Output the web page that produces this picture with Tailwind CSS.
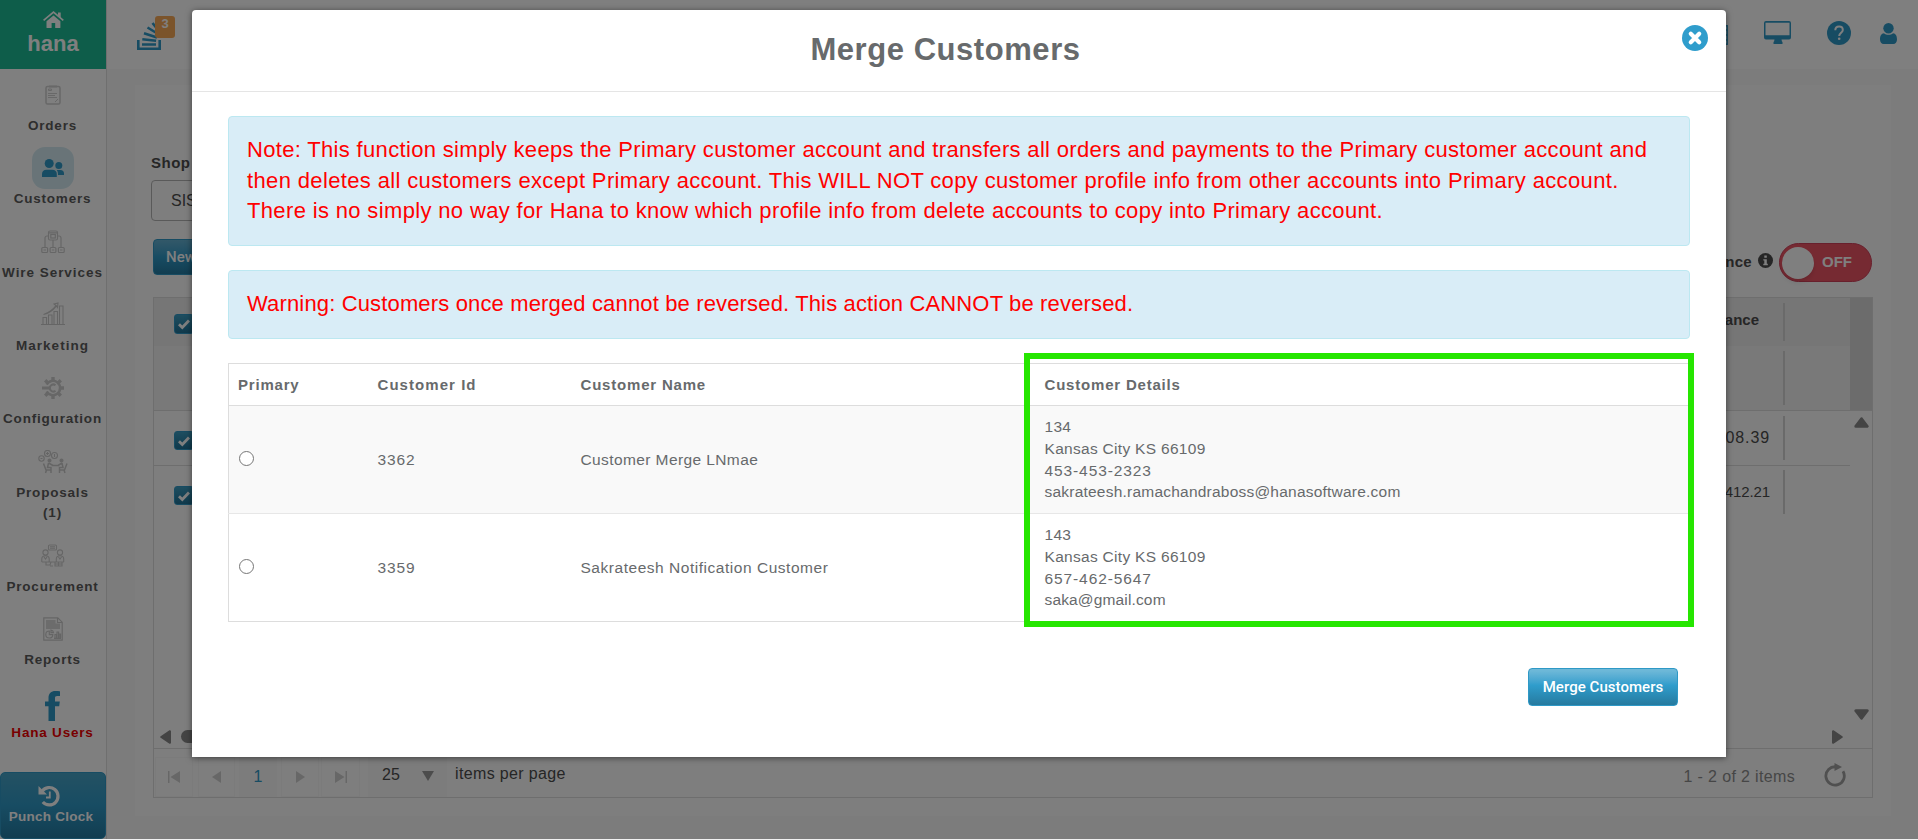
<!DOCTYPE html>
<html lang="en">
<head>
  <meta charset="UTF-8" />
  <meta name="viewport" content="width=device-width, initial-scale=1.0" />
  <title>Hana - Customers</title>
  <script src="https://cdn.jsdelivr.net/npm/@tailwindcss/browser@4"></script>
  <style>
    body { font-family: 'Liberation Sans', Arial, sans-serif; }
  </style>
</head>
<body class="relative h-[840px] overflow-hidden bg-[#f1f1f1]">

  <div class="flex h-[839px] bg-[#f8f8f8]">
    <!-- Sidebar -->
    <aside class="flex w-[107px] shrink-0 flex-col border-r border-[#dedede] bg-white text-center text-[13.500px] font-bold tracking-[0.800px] text-[#5c5c5c]">
      <a href="#" class="flex h-[69px] w-[106px] shrink-0 flex-col items-center bg-[#1cbb94] pt-[11px] text-white">
        <svg class="h-[18px] w-[21px]" viewBox="0 0 21 18" fill="#fff"><path d="M10.500 4.500 3.500 10.300V16.500a.6.6 0 0 0 .6.6H8.600V12h3.600v5.100h4.600a.6.6 0 0 0 .6-.6V10.300z"/><path d="M.6 9.300 10.500 1.200l9.800 8.100" fill="none" stroke="#fff" stroke-width="1.700"/><path d="M15 1.500h2.700v5.200L15 4.500z"/></svg>
        <span class="mt-0.5 text-[22px] leading-[26px] tracking-[0.100px]">hana</span>
      </a>
      <nav class="flex w-[105px] grow flex-col pt-1 leading-5">
        <a href="#" class="flex h-[73.300px] flex-col items-center">
          <span class="flex h-[43px] w-[42px] items-center justify-center">
            <svg class="h-5 w-4" viewBox="0 0 16 20" fill="none" stroke="#d0d0d0"><rect x="1" y="1.500" width="14" height="17.500" rx="1.500" stroke-width="1.500"/><path d="M3.500 4h3v1.500h-3zM3 8.500h9M3 10.500h7M3 12.500h9M10 17l3-3"/><path d="M4 1.500h8" stroke-width="2"/></svg>
          </span>
          <span>Orders</span>
        </a>
        <a href="#" class="flex h-[73.300px] flex-col items-center">
          <span class="mt-px flex h-[42px] w-[42px] items-center justify-center rounded-[13px] bg-[#d3e9f1]">
            <svg class="h-[18px] w-[22px]" viewBox="0 0 22 18" fill="#2f99c6"><circle cx="7.200" cy="4.500" r="4.500"/><circle cx="16.800" cy="6.500" r="3.500"/><path d="M0 18v-3c0-2.500 1.500-4.300 4.500-4.300h5.700c3 0 4.600 1.800 4.600 4.300v3z"/><path d="M16 16h6v-1.700c0-2-1.300-3.300-3.600-3.300h-3.600c.8 1.100 1.200 2.500 1.200 4z"/></svg>
          </span>
          <span>Customers</span>
        </a>
        <a href="#" class="flex h-[73.300px] flex-col items-center">
          <span class="flex h-[45px] w-[42px] items-center justify-center">
            <svg class="h-6 w-6" viewBox="0 0 24 24" fill="none" stroke="#cdcdcd" stroke-width="1.200"><rect x="7.500" y="1" width="9" height="9" rx="1.500"/><rect x="9.800" y="4.500" width="4.500" height="3.500"/><path d="M7.500 2.800h9M12 10v7M7.500 6H6a2 2 0 0 0-2 2v9M16.500 6H18a2 2 0 0 1 2 2v9"/><rect x=".8" y="17.500" width="5.800" height="5" rx="1"/><rect x="9.100" y="17.500" width="5.800" height="5" rx="1"/><rect x="17.400" y="17.500" width="5.800" height="5" rx="1"/><path d="M2.500 20h2.500M10.800 20h2.500M19 20h2.500"/></svg>
          </span>
          <span class="-mt-0.5 whitespace-nowrap tracking-[0.950px]">Wire Services</span>
        </a>
        <a href="#" class="flex h-[73.300px] flex-col items-center">
          <span class="flex h-[43px] w-[42px] items-center justify-center">
            <svg class="h-6 w-6" viewBox="0 0 24 24" fill="none" stroke="#cbcbcb" stroke-width="1.100"><path d="M0 22.500h24M2 22v-6.500h3.500V22M7.500 22v-9H11v9M13 22V9.500h3.500V22M18.500 22V4H22v18M2.500 12.500C8 10.500 12 7.500 15 3.500L13 2l4-1-.5 4.500-1-1.500C12 8.500 8 11.500 2.500 12.500"/></svg>
          </span>
          <span class="tracking-[1px]">Marketing</span>
        </a>
        <a href="#" class="flex h-[73.300px] flex-col items-center">
          <span class="flex h-[43px] w-[42px] items-center justify-center">
            <svg class="mt-px h-[22px] w-[22px]" viewBox="0 0 22 22" fill="none" stroke="#cecece"><path d="M4.600 14.500a7.200 7.200 0 1 0 0-7" stroke-width="2.600"/><path d="M11 0v4M11 18v4M18 11h4M3.200 3.200l2.900 2.900M15.900 15.900l2.900 2.900M18.800 3.200l-2.900 2.900M6.100 15.900l-2.900 2.900" stroke-width="3.400"/><path d="M0 11h8.500" stroke-width="3"/><path d="M13.500 8.300a3.500 3.500 0 1 0 0 5.400" stroke-width="2"/></svg>
          </span>
          <span class="whitespace-nowrap">Configuration</span>
        </a>
        <a href="#" class="flex h-[94px] flex-col items-center">
          <span class="flex h-[43px] w-[42px] items-center justify-center">
            <svg class="mt-0.5 h-6 w-[30px]" viewBox="0 0 30 24" fill="none" stroke="#cbcbcb" stroke-width="1.100"><circle cx="3.500" cy="8.500" r="2.700"/><circle cx="9.500" cy="3.500" r="3"/><circle cx="16.500" cy="5.500" r="3"/><path d="M2.500 8.500h2M8 3.500h3M9.500 2v3M16.500 4v3"/><circle cx="11.500" cy="10.500" r="1.500" fill="#cbcbcb"/><circle cx="23.500" cy="10.500" r="1.500" fill="#cbcbcb"/><path d="M5.500 13.500 8 20h5M10.500 13l-1 4.500h3.500v5.500M7.500 23l1-3M10.500 13l4.500 2.500M29 13.500 26.500 20h-4.500M24 13l1 4.500h-3.500v5.500M27 23l-1-3M24 13l-4 2.500M14 15.500h7" stroke-width="1.500"/></svg>
          </span>
          <span class="mt-px leading-5">Proposals<br>(1)</span>
        </a>
        <a href="#" class="flex h-[73.300px] flex-col items-center">
          <span class="flex h-[44px] w-[42px] items-center justify-center">
            <svg class="mt-0.5 h-6 w-6" viewBox="0 0 24 24" fill="none" stroke="#cdcdcd" stroke-width="1.100"><rect x="7.500" y="1" width="8" height="5" rx="1"/><path d="M9 2.800h5M9 4.300h5"/><circle cx="4.500" cy="8.500" r="2.600"/><circle cx="19" cy="8.500" r="2.600"/><path d="M.8 18v-3c0-2 1.500-3.200 3.700-3.200S8.200 13 8.200 15v3M15.300 18v-3c0-2 1.500-3.200 3.700-3.200s3.700 1.200 3.700 3.200v3M.8 18h22M3 13l1.500 2L6 13M17.500 13l1.500 2 1.500-2M5 18v3h4l1-3M9 22h3M14 18v4h7v-4M17.500 18v4M14 20h7"/></svg>
          </span>
          <span>Procurement</span>
        </a>
        <a href="#" class="flex h-[73.300px] flex-col items-center">
          <span class="flex h-[43px] w-[42px] items-center justify-center">
            <svg class="mt-0.5 h-6 w-5" viewBox="0 0 20 24" fill="none" stroke="#cbcbcb" stroke-width="1.200"><path d="M.8.800h14l4.400 4.400v18H.8z"/><path d="M3 3h9.500v3.500H17V12H3z" fill="#d8d8d8" stroke="none"/><path d="M14.500 1v4.500H19"/><path d="M6.300 14a3.500 3.500 0 1 0 3.500 3.700H6.300zM8 13a3 3 0 0 1 2.500 2.700H8zM12 21v-3.500h1.600V21M14 21v-6h1.600v6M16.200 21v-4h1.400v4M11 21.300h7"/></svg>
          </span>
          <span>Reports</span>
        </a>
        <a href="#" class="flex flex-col items-center text-[#f00000]">
          <span class="flex h-[43px] w-[42px] items-end justify-center pb-0.5">
            <svg class="h-[30px] w-[15px]" viewBox="0 0 15 30" fill="#2f99c6"><path d="M15 .2v4.800h-2.700c-1.900 0-2.300.9-2.300 2.300v3.100h4.800l-.6 4.900H10V30H3.500V15.300H0v-4.900h3.500V6.800C3.500 2.500 6.200 0 10.300 0c2 0 3.900.1 4.700.2z"/></svg>
          </span>
          <span>Hana Users</span>
        </a>
      </nav>
      <button class="flex h-[67px] w-[106px] shrink-0 flex-col items-center rounded-[5px] border border-[#2f99c6] bg-linear-to-b from-[#47a3c6] via-[#2f99c6] to-[#247ba2] pt-[12px] pr-1 font-bold tracking-[0.250px] text-white">
        <svg class="mr-1 h-[22px] w-[22px]" viewBox="0 0 22 22" fill="none" stroke="#fff"><path d="M4.200 6.200A8.700 8.700 0 1 1 4.800 17" stroke-width="3.200"/><path d="M.5 1v8.500H9z" fill="#fff" stroke="none"/><path d="M11.800 6.500v6H8" stroke-width="1.800"/></svg>
        <span class="leading-[19px] whitespace-nowrap">Punch Clock</span>
      </button>
    </aside>

    <main class="flex grow flex-col">
      <!-- Top bar -->
      <header class="flex h-[69px] items-start justify-between bg-white pr-[22px] pl-[30px]">
        <div class="relative mt-5">
          <svg class="h-[30px] w-6" viewBox="0 0 24 30" fill="none" stroke="#2f99c6" stroke-width="2.600"><path d="M1.300 20v8.700h21.400V20"/><path d="M5 24.500h14M5.300 19.200l13.800 1.500M7 13.200l13 4.300M10.500 7.500l11.500 7M15.500 3l8 10"/></svg>
          <span class="absolute -top-1 left-[18px] h-[22px] w-5 rounded-[3px] bg-[#f7a957] text-center text-[13px] leading-4 font-bold text-white">3</span>
        </div>
        <div class="flex text-[#2f99c6]">
          <svg class="mt-[25px] mr-[36px] h-5 w-[22px]" viewBox="0 0 22 20" fill="none" stroke="#2f99c6" stroke-width="1.500"><rect x=".8" y=".8" width="20.400" height="18.400"/><path d="M0 5h22M0 10h22M0 15h22"/></svg>
          <svg class="mt-[21px] h-[23px] w-[27px]" viewBox="0 0 27 23"><path d="M2 0h23a2 2 0 0 1 2 2v14.500a2 2 0 0 1-2 2h-7.500l.5 2.200h.5V23h-9v-2.300h.5l.5-2.200H2a2 2 0 0 1-2-2V2a2 2 0 0 1 2-2zM1.500 1.700v12.600h24V1.700z" fill="#2f99c6" fill-rule="evenodd"/></svg>
          <svg class="mt-[21px] ml-9 h-6 w-6" viewBox="0 0 24 24"><circle cx="12" cy="12" r="12" fill="#2f99c6"/><path d="M8.300 9.300c0-2.300 1.500-3.700 3.800-3.700s3.700 1.400 3.700 3.300c0 2.600-3.600 3-3.600 6" fill="none" stroke="#fff" stroke-width="2"/><circle cx="12.200" cy="17.700" r="1.300" fill="#fff"/></svg>
          <svg class="mt-[23px] ml-[29px] h-[21px] w-[17px]" viewBox="0 0 17 21" fill="#2f99c6"><circle cx="8.500" cy="5.200" r="5.200"/><path d="M4 10.200c1.200 1 2.700 1.600 4.500 1.600s3.300-.6 4.500-1.600c2.800.3 4 2.800 4 6.300 0 2.700-1.500 4.500-3.700 4.500H3.700C1.500 21 0 19.200 0 16.500c0-3.500 1.200-6 4-6.300z"/></svg>
        </div>
      </header>

      <section class="mx-7 mt-4 flex h-[731px] w-[1756px] flex-col bg-[#fdfdfd] pr-[18px] pl-[16px] pt-[67px] text-[15px] text-[#4c4c4c]">
        <div class="h-[28px] text-[15px] leading-[22px] font-bold tracking-[0.500px]">Shop</div>
        <div class="h-[41px] w-[300px] rounded border border-[#b5b5b5] pl-[19px] text-[16px] leading-[39px]">SIS</div>
        <div class="mt-[18px] mb-[16px] flex h-[42px] items-start justify-between pl-0.5">
          <button class="h-9 w-[120px] rounded border border-[#2f99c6] bg-linear-to-b from-[#65b1d2] via-[#2f99c6] to-[#247ba2] pl-3 text-left font-['Roboto'] text-[15px] font-medium text-white">New</button>
          <div class="mr-px flex items-center font-bold">
            <span class="pt-1 pr-[6px] tracking-[0.300px]">Balance</span>
            <svg class="mr-1.5 h-[15px] w-[15px]" viewBox="0 0 15 15"><circle cx="7.500" cy="7.500" r="7.500" fill="#4c4c4c"/><path d="M6.300 2.500h2.500v2.300H6.300zM5.300 6.200h3.500v4.500h1v1.500H5.300v-1.500h1V7.600h-1z" fill="#fff"/></svg>
            <span class="mt-1 flex h-[39px] w-[93px] items-center rounded-full border border-[#d0405a] bg-[#ed5565] pl-0.5 text-white">
              <span class="mr-2 h-8 w-8 rounded-full bg-white shadow-md"></span>OFF
            </span>
          </div>
        </div>

        <!-- Customers grid -->
        <div class="ml-0.5 flex h-[501px] shrink-0 flex-col border border-[#dcdcdc]">
          <div class="flex h-[113px] border-b border-[#dcdcdc]">
            <div class="grow">
              <div class="flex h-12 items-center justify-between bg-[#ececec] pr-[65px] pl-5">
                <span class="mt-1 flex h-5 w-5 items-center justify-center rounded-[3px] border border-[#2f99c6] bg-linear-to-b from-[#3d9cc0] to-[#1f7398]"><svg class="h-3 w-3" viewBox="0 0 12 12" fill="none" stroke="#fff" stroke-width="2.800"><path d="M1 6.200 4.300 9.500 11 2.500"/></svg></span>
                <span class="flex items-center font-bold"><span class="pb-1">Balance</span><i class="ml-[24px] h-[38px] w-0.5 bg-[#d4d4d4]"></i></span>
              </div>
              <div class="flex h-16 items-center justify-end bg-[#f2f2f2] pr-[65px]"><i class="h-[54px] w-0.5 bg-[#d4d4d4]"></i></div>
            </div>
            <div class="w-[22px] bg-[#d9d9d9]"></div>
          </div>
          <div class="flex grow">
            <div class="grow">
              <div class="flex h-[55px] items-center justify-between border-b border-[#dcdcdc] pr-[65px] pl-5">
                <span class="mt-5 flex h-[19px] w-5 items-center justify-center self-start rounded-[3px] border border-[#2f99c6] bg-linear-to-b from-[#3d9cc0] to-[#1f7398]"><svg class="h-3 w-3" viewBox="0 0 12 12" fill="none" stroke="#fff" stroke-width="2.800"><path d="M1 6.200 4.300 9.500 11 2.500"/></svg></span>
                <span class="flex items-center text-[16px] tracking-[0.900px]">08.39<i class="ml-[13px] h-[44px] w-0.5 bg-[#d4d4d4]"></i></span>
              </div>
              <div class="flex h-[52px] items-center justify-between pr-[65px] pl-5">
                <span class="mt-5 flex h-[19px] w-5 items-center justify-center self-start rounded-[3px] border border-[#2f99c6] bg-linear-to-b from-[#3d9cc0] to-[#1f7398]"><svg class="h-3 w-3" viewBox="0 0 12 12" fill="none" stroke="#fff" stroke-width="2.800"><path d="M1 6.200 4.300 9.500 11 2.500"/></svg></span>
                <span class="flex items-center tracking-[-0.100px]">412.21<i class="ml-[13px] h-[44px] w-0.5 bg-[#d4d4d4]"></i></span>
              </div>
            </div>
            <div class="flex w-[22px] flex-col items-center justify-between pt-[6px] pb-[10px]">
              <svg class="h-[11px] w-[15px]" viewBox="0 0 15 11" fill="#888" stroke="#888" stroke-width="3" stroke-linejoin="round"><path d="M7.500 1.800 13.200 9.300H1.800z"/></svg>
              <svg class="h-[11px] w-[15px]" viewBox="0 0 15 11" fill="#888" stroke="#888" stroke-width="3" stroke-linejoin="round"><path d="M7.500 9.200 13.200 1.700H1.800z"/></svg>
            </div>
          </div>
          <div class="flex h-[18px] items-start pr-[29px] pl-1.5">
            <svg class="h-[14px] w-[11px]" viewBox="0 0 11 14" fill="#888" stroke="#888" stroke-width="2" stroke-linejoin="round"><path d="M1.200 7 10 1.200v11.600z"/></svg>
            <span class="ml-[10px] h-[13px] w-[900px] rounded-full bg-[#888]"></span>
            <svg class="ml-auto h-[14px] w-[11px]" viewBox="0 0 11 14" fill="#888" stroke="#888" stroke-width="2" stroke-linejoin="round"><path d="M9.800 7 1 1.200v11.600z"/></svg>
          </div>
          <!-- Pager -->
          <div class="flex h-[49px] items-center border-t border-[#dcdcdc] pl-px pt-[7px] text-[16px]">
            <span class="flex h-10 w-[38px] items-center justify-center border border-[#f6f6f6]"><svg class="h-3 w-3" viewBox="0 0 12 12" fill="#cfcfcf"><path d="M0 0h1.500v12H0zM12 0v12L2.500 6z"/></svg></span>
            <span class="ml-[5px] flex h-10 w-[37px] items-center justify-center border border-[#f6f6f6]"><svg class="h-3 w-[9px]" viewBox="0 0 9 12" fill="#cfcfcf"><path d="M9 0v12L0 6z"/></svg></span>
            <span class="ml-[4px] flex h-10 w-[38px] items-center justify-center bg-[#f8f8f8] text-[#2f99c6]">1</span>
            <span class="ml-[4px] flex h-10 w-[38px] items-center justify-center border border-[#f6f6f6]"><svg class="h-3 w-[9px]" viewBox="0 0 9 12" fill="#cfcfcf"><path d="M0 0v12l9-6z"/></svg></span>
            <span class="ml-[2px] flex h-10 w-[39px] items-center justify-center border border-[#f6f6f6]"><svg class="h-3 w-3" viewBox="0 0 12 12" fill="#cfcfcf"><path d="M10.500 0H12v12h-1.500zM0 0v12l9.500-6z"/></svg></span>
            <span class="ml-[8px] flex h-10 w-[79px] items-center justify-between bg-[#f8f8f8] pr-[13px] pb-[4px] pl-[14px]">25<svg class="mt-[3px] h-[10px] w-3" viewBox="0 0 12 10" fill="#999"><path d="M0 0h12L6 10z"/></svg></span>
            <span class="mb-[5px] ml-[8px] text-[16px] tracking-[0.350px]">items per page</span>
            <span class="mr-[29px] ml-auto text-[16px] tracking-[0.350px] text-[#8d8d8d]">1 - 2 of 2 items</span>
            <svg class="mr-[26px] -mt-1 h-6 w-[22px]" viewBox="0 0 22 24" fill="none" stroke="#a0a0a0" stroke-width="2.800"><path d="M12 3.800a9.200 9.200 0 1 0 7 4.500"/><path d="M10.500 0v8L18 4z" fill="#a0a0a0" stroke="none"/></svg>
          </div>
        </div>
      </section>
    </main>
  </div>

  <!-- Backdrop -->
  <div class="absolute inset-x-0 top-0 h-[839px] bg-black/50"></div>

  <!-- Merge modal -->
  <div class="absolute top-[10px] left-[192px] flex h-[747px] w-[1534px] flex-col rounded-t bg-white text-[15px] tracking-[0.500px] text-[#676a6c] shadow-[0_1px_6px_rgba(0,0,0,0.5)]">
    <div class="relative h-[82px] border-b border-[#e5e5e5] pt-[22px] pr-[27px] text-center">
      <h2 class="text-[31px] leading-[36px] font-bold tracking-[0.550px]">Merge Customers</h2>
      <button class="absolute top-[15px] right-[18px]">
        <svg class="h-[26px] w-[26px]" viewBox="0 0 26 26"><circle cx="13" cy="13" r="13" fill="#2f9dcc"/><path d="M8.800 8.800l8.400 8.400M17.200 8.800l-8.400 8.400" stroke="#fff" stroke-width="4.200" stroke-linecap="round"/></svg>
      </button>
    </div>
    <div class="flex flex-col px-9 pt-[24px]">
      <div class="h-[130px] rounded border border-[#bce8f1] bg-[#d9edf7] pt-[18px] pl-[18px] text-[22px] leading-[30.500px] whitespace-nowrap text-[#ff0000]">
        <p class="tracking-[0.330px]">Note: This function simply keeps the Primary customer account and transfers all orders and payments to the Primary customer account and</p>
        <p class="tracking-[0.360px]">then deletes all customers except Primary account. This WILL NOT copy customer profile info from other accounts into Primary account.</p>
        <p class="tracking-[0.350px]">There is no simply no way for Hana to know which profile info from delete accounts to copy into Primary account.</p>
      </div>
      <div class="mt-6 h-[69px] rounded border border-[#bce8f1] bg-[#d9edf7] pt-[17px] pl-[18px] text-[22px] leading-[31px] tracking-[0.150px] text-[#ff0000]">Warning: Customers once merged cannot be reversed. This action CANNOT be reversed.</div>

      <div class="relative mt-6">
        <table class="w-full table-fixed border border-[#ddd] text-left">
          <colgroup><col class="w-[140px]"><col class="w-[203px]"><col class="w-[464px]"><col></colgroup>
          <thead>
            <tr class="h-[42px] border-b border-[#ddd] text-[15px] tracking-[0.800px]">
              <th class="pt-0.5 pl-[9px]">Primary</th>
              <th class="pt-0.5 pl-[9px] tracking-[1.050px]">Customer Id</th>
              <th class="pt-0.5 pl-[9px]">Customer Name</th>
              <th class="pt-0.5 pl-[9px]">Customer Details</th>
            </tr>
          </thead>
          <tbody class="text-[15.500px] leading-[21.700px]">
            <tr class="h-[108px] border-b border-[#e7e7e7] bg-[#f9f9f9]">
              <td class="pb-0.5 pl-[10px]"><span class="block h-[15px] w-[15px] rounded-full border border-[#767676] bg-white"></span></td>
              <td class="pl-[9px] tracking-[0.850px]">3362</td>
              <td class="pl-[9px] tracking-[0.400px]">Customer Merge LNmae</td>
              <td class="pl-[9px] tracking-[0.300px]">134<br>Kansas City KS 66109<br><span class="tracking-[0.900px]">453-453-2323</span><br><span class="tracking-[0.220px]">sakrateesh.ramachandraboss@hanasoftware.com</span></td>
            </tr>
            <tr class="h-[108px]">
              <td class="pb-0.5 pl-[10px]"><span class="block h-[15px] w-[15px] rounded-full border border-[#767676] bg-white"></span></td>
              <td class="pl-[9px] tracking-[0.850px]">3359</td>
              <td class="pl-[9px] tracking-[0.530px]">Sakrateesh Notification Customer</td>
              <td class="pl-[9px] tracking-[0.300px]">143<br>Kansas City KS 66109<br><span class="tracking-[0.900px]">657-462-5647</span><br><span class="tracking-[0.150px]">saka@gmail.com</span></td>
            </tr>
          </tbody>
        </table>
        <div class="absolute -top-[10px] left-[796px] h-[274px] w-[670px] border-6 border-[#26e600]"></div>
      </div>

      <button class="mt-[46px] mr-3 h-[38px] w-[150px] self-end rounded border border-[#2f99c6] bg-linear-to-b from-[#6db8d8] from-5% via-[#2f9dcc] via-45% to-[#267a9f] font-['Roboto'] text-[15px] font-medium tracking-[0.050px] whitespace-nowrap text-white">Merge Customers</button>
    </div>
  </div>

</body>
</html>
